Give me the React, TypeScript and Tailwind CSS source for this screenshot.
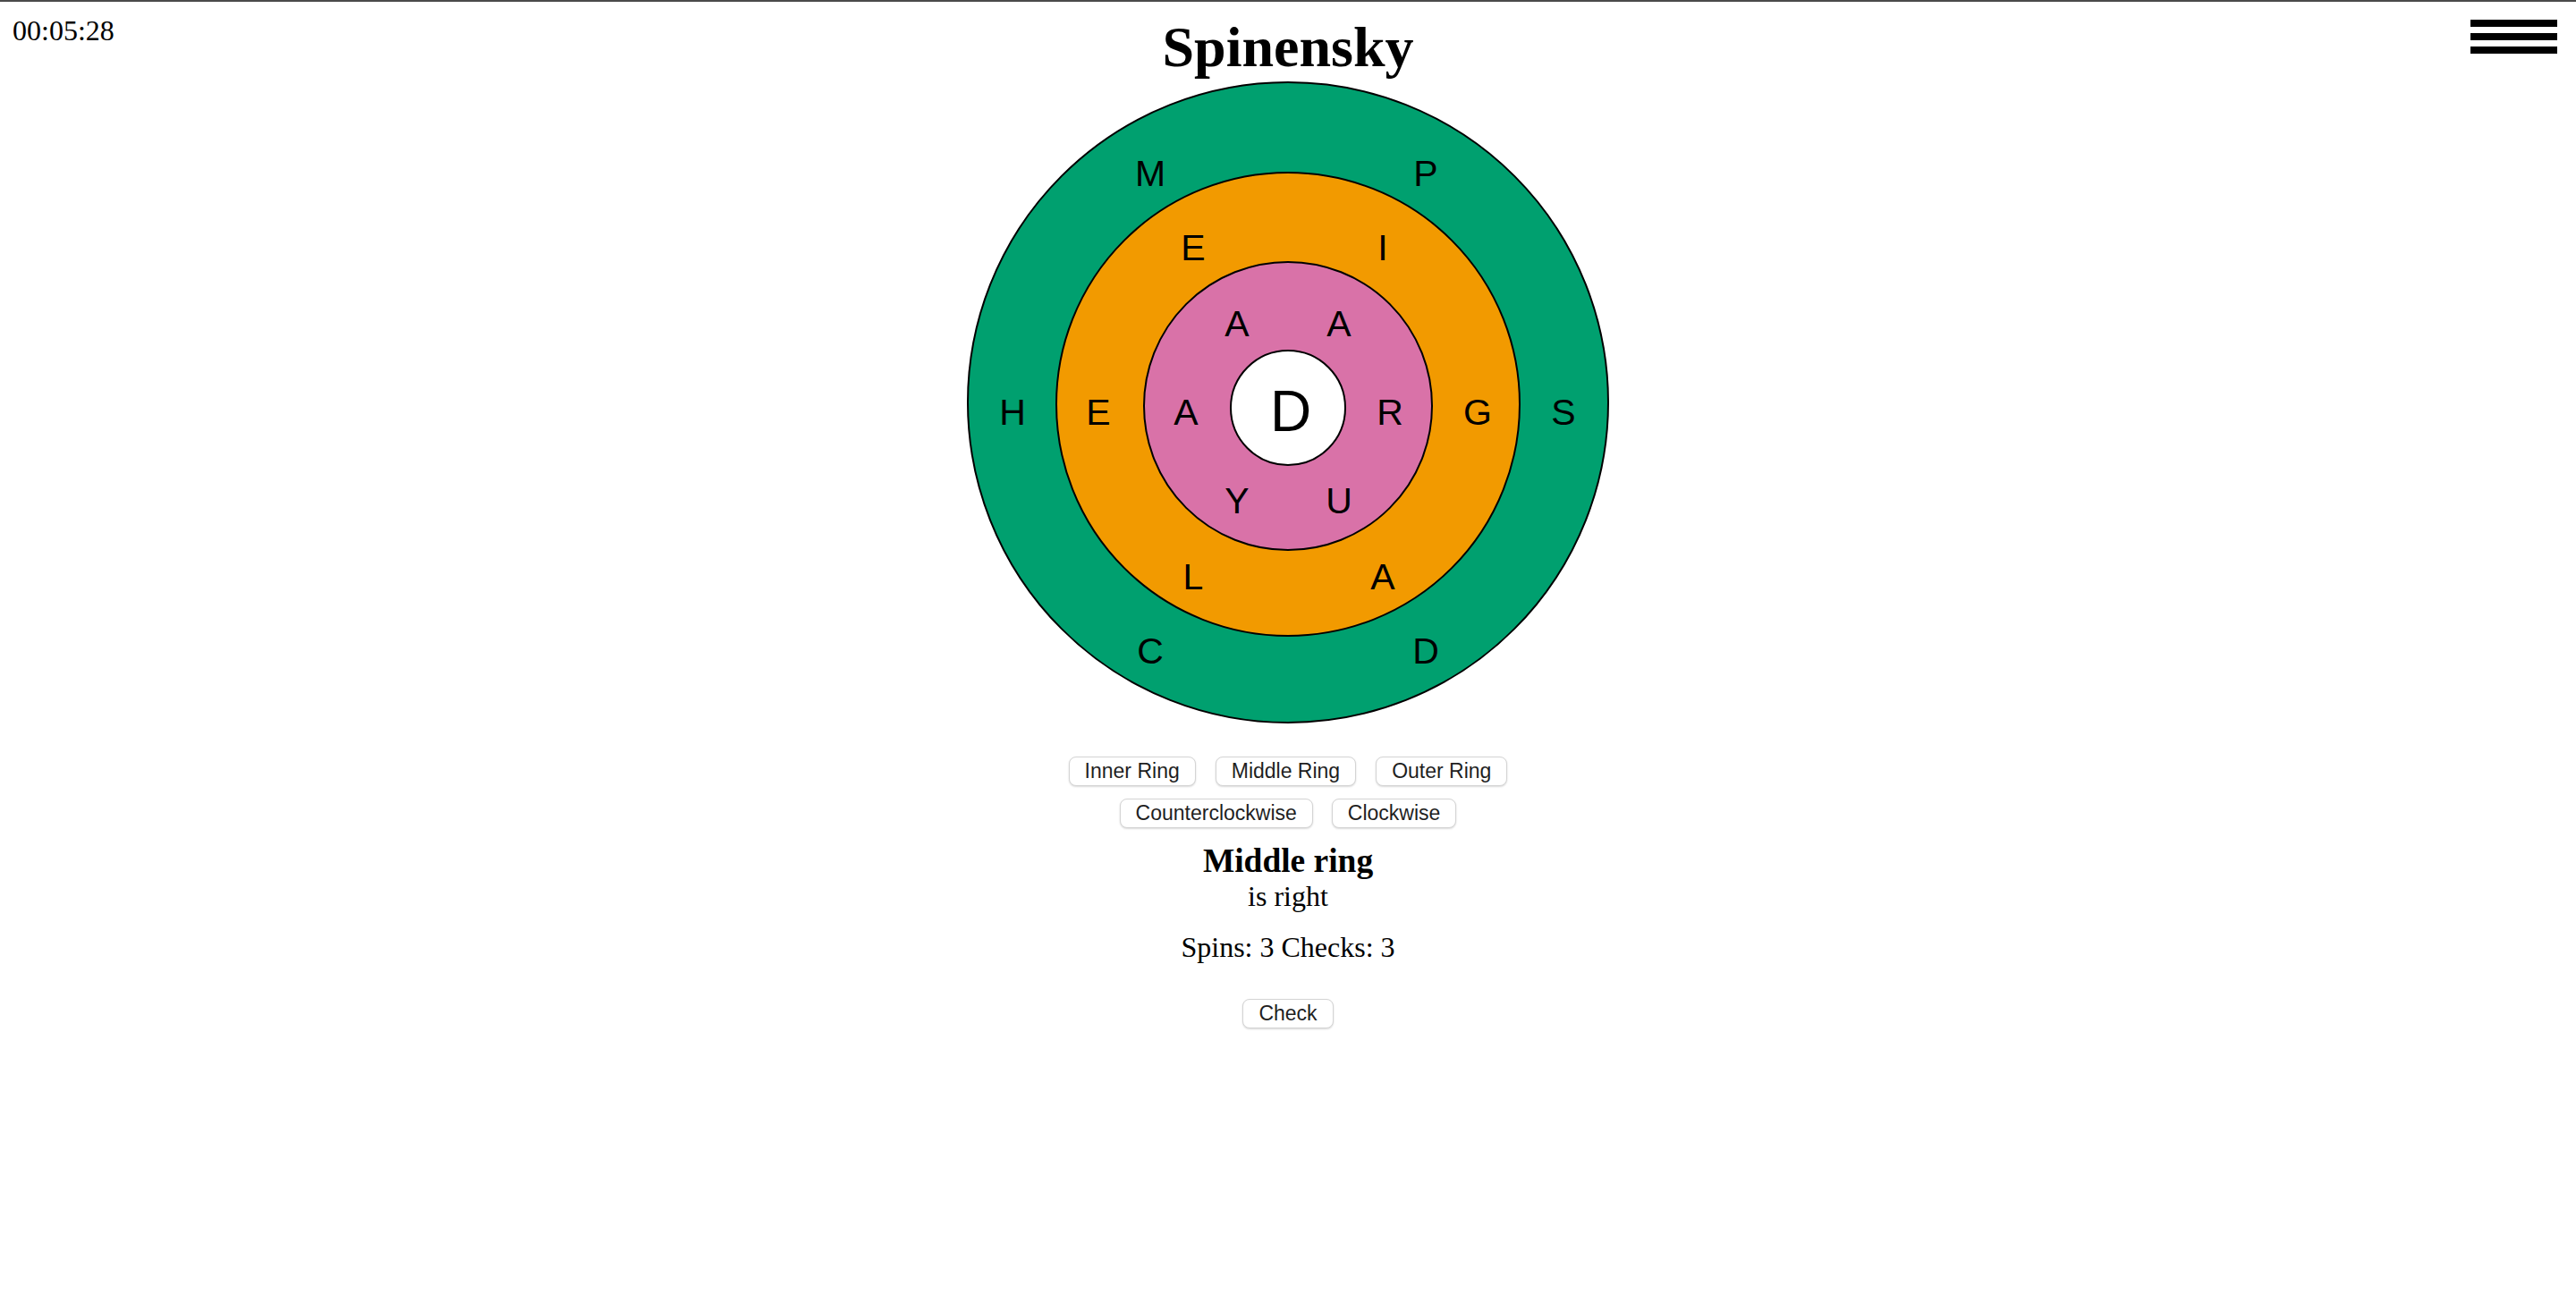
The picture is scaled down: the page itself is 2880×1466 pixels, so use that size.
import React from "react";

const CX = 360;
const CY = 360;

const rings = [
  { r: 358, dy: 0, fill: "#00A06F", textR: 308, letters: ["S", "P", "M", "H", "C", "D"] },
  { r: 259, dy: 2, fill: "#F29A00", textR: 212, letters: ["G", "I", "E", "E", "L", "A"] },
  { r: 161, dy: 4, fill: "#D972A8", textR: 114, letters: ["R", "A", "A", "A", "Y", "U"] },
];

function Wheel() {
  return (
    <svg width={720} height={720} viewBox="0 0 720 720" className="block">
      {rings.map((ring) => (
        <circle key={ring.r} cx={CX} cy={CY + ring.dy} r={ring.r} fill={ring.fill} stroke="#000" strokeWidth={2} />
      ))}
      <circle cx={CX} cy={CY + 6} r={64} fill="#fff" stroke="#000" strokeWidth={2} />
      {rings.map((ring) =>
        ring.letters.map((l, i) => {
          const a = (i * Math.PI) / 3;
          return (
            <text
              key={ring.r + "-" + i}
              x={CX + ring.textR * Math.cos(a)}
              y={CY + 25 - ring.textR * Math.sin(a)}
              textAnchor="middle"
              fontSize={41}
              fontFamily="'Liberation Sans', Arial, sans-serif"
              fill="#000"
            >
              {l}
            </text>
          );
        })
      )}
      <text
        x={CX + 3}
        y={CY + 32}
        textAnchor="middle"
        fontSize={64}
        fontFamily="'Liberation Sans', Arial, sans-serif"
        fill="#000"
      >
        D
      </text>
    </svg>
  );
}

function Btn({ children }: { children: React.ReactNode }) {
  return (
    <button className="h-[33px] px-[17px] rounded-[8px] border border-[#d4d4d4] bg-white text-[23px] leading-none text-[#1f1f1f] shadow-[0_1px_2px_rgba(0,0,0,0.15)] font-['Liberation_Sans',Arial,sans-serif]">
      {children}
    </button>
  );
}

export default function App() {
  return (
    <div className="min-h-screen bg-white border-t-2 border-[#4a4a4a] text-black font-['Liberation_Serif','Times_New_Roman',serif]">
      {/* Header */}
      <div className="grid grid-cols-[1fr_auto_1fr] items-start pt-[14px]">
        <div className="pl-[14px] text-[32px] leading-[37px]">00:05:28</div>
        <h1 className="text-[64px] font-bold leading-[74px]">Spinensky</h1>
        <div className="justify-self-end pr-[21px] pt-[6px] flex flex-col gap-[7px]">
          <span className="block w-[97px] h-[8px] bg-black" />
          <span className="block w-[97px] h-[8px] bg-black" />
          <span className="block w-[97px] h-[8px] bg-black" />
        </div>
      </div>

      <div className="flex flex-col items-center">
        <Wheel />

        <div className="mt-[36px] flex gap-[22px]">
          <Btn>Inner Ring</Btn>
          <Btn>Middle Ring</Btn>
          <Btn>Outer Ring</Btn>
        </div>
        <div className="mt-[14px] flex gap-[21px]">
          <Btn>Counterclockwise</Btn>
          <Btn>Clockwise</Btn>
        </div>

        <h3 className="mt-[15px] text-[37.44px] font-bold leading-[43px]">Middle ring</h3>
        <div className="text-[32px] leading-[37px]">is right</div>
        <div className="mt-[20px] text-[32px] leading-[37px]">Spins: 3 Checks: 3</div>

        <div className="mt-[39px]">
          <Btn>Check</Btn>
        </div>
      </div>
    </div>
  );
}
